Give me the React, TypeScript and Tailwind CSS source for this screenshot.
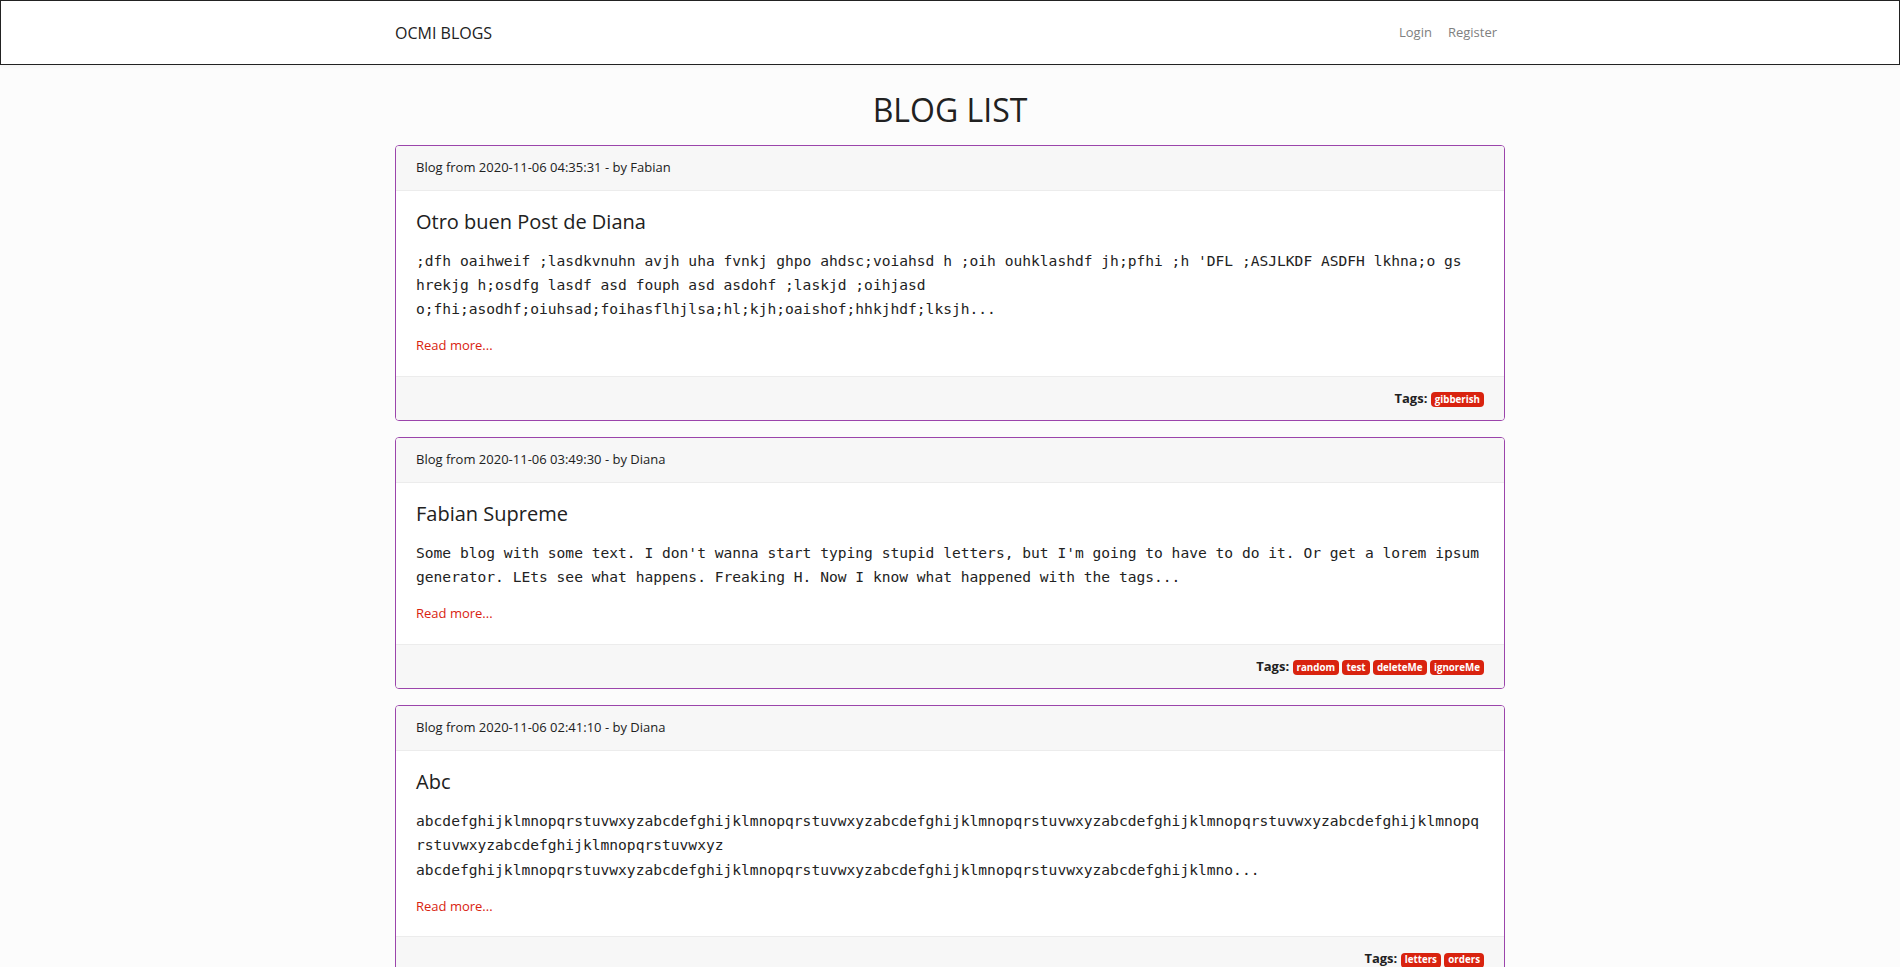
import React from "react";

type Blog = {
  date: string;
  author: string;
  title: string;
  text: string;
  tags: string[];
};

const ALPHA = "abcdefghijklmnopqrstuvwxyz";

const blogs: Blog[] = [
  {
    date: "2020-11-06 04:35:31",
    author: "Fabian",
    title: "Otro buen Post de Diana",
    text: ";dfh oaihweif ;lasdkvnuhn avjh uha fvnkj ghpo ahdsc;voiahsd h ;oih ouhklashdf jh;pfhi ;h 'DFL ;ASJLKDF ASDFH lkhna;o gs hrekjg h;osdfg lasdf asd fouph asd asdohf ;laskjd ;oihjasd o;fhi;asodhf;oiuhsad;foihasflhjlsa;hl;kjh;oaishof;hhkjhdf;lksjh...",
    tags: ["gibberish"],
  },
  {
    date: "2020-11-06 03:49:30",
    author: "Diana",
    title: "Fabian Supreme",
    text: "Some blog with some text. I don't wanna start typing stupid letters, but I'm going to have to do it. Or get a lorem ipsum generator. LEts see what happens. Freaking H. Now I know what happened with the tags...",
    tags: ["random", "test", "deleteMe", "ignoreMe"],
  },
  {
    date: "2020-11-06 02:41:10",
    author: "Diana",
    title: "Abc",
    text: ALPHA.repeat(6) + " " + ALPHA.repeat(3) + "abcdefghijklmno...",
    tags: ["letters", "orders"],
  },
];

function Card({ blog }: { blog: Blog }) {
  return (
    <div className="mb-[16px] overflow-hidden rounded-[4px] border border-[#9b45ab] bg-white [overflow-wrap:break-word]">
      <div className="border-b border-[#ececec] bg-[#f7f7f7] px-5 py-3 text-[13px] leading-[19.5px] text-[#212121]">
        Blog from {blog.date} - by {blog.author}
      </div>
      <div className="px-5 pt-[19px] pb-5">
        <h5 className="mb-[15px] text-[20px] leading-[24px] text-[#212121]">
          {blog.title}
        </h5>
        <p className="mb-[15px] font-['DejaVu_Sans_Mono',monospace] text-[14.6px] leading-[24.3px] text-[#222]">
          {blog.text}
        </p>
        <a className="block text-[13px] leading-[19.5px] text-[#d9230f]" href="#">
          Read more...
        </a>
      </div>
      <div className="border-t border-[#ececec] bg-[#f7f7f7] px-5 py-3 text-right text-[13px] leading-[19.5px] text-[#212121]">
        <b className="font-bold">Tags:</b>{" "}
        {blog.tags.map((t, i) => (
          <React.Fragment key={t}>
            <span className="inline-block rounded-[4px] bg-[#d9230f] px-[4px] py-[2.5px] align-baseline text-[9.75px] font-bold leading-none text-white">
              {t}
            </span>
            {i < blog.tags.length - 1 ? " " : null}
          </React.Fragment>
        ))}
      </div>
    </div>
  );
}

export default function App() {
  return (
    <div className="min-h-screen bg-[#fcfcfc] font-['Open_Sans',sans-serif] text-[#212121]">
      <nav className="h-[65px] border border-[#222] bg-white shadow-[0_2px_4px_rgba(0,0,0,0.04)]">
        <div className="mx-auto flex h-full max-w-[1140px] items-center justify-between px-[15px]">
          <span className="text-[16px] leading-[24px] text-[#212121]">OCMI BLOGS</span>
          <div className="flex text-[13px] leading-[19.5px] text-[#808080]">
            <a className="px-2" href="#">Login</a>
            <a className="px-2" href="#">Register</a>
          </div>
        </div>
      </nav>
      <main className="mx-auto max-w-[1140px] px-[15px]">
        <h2 className="pt-[26px] pb-[16px] text-center text-[32px] leading-[38px] text-[#212121]">
          BLOG LIST
        </h2>
        {blogs.map((b) => (
          <Card key={b.date} blog={b} />
        ))}
      </main>
    </div>
  );
}
